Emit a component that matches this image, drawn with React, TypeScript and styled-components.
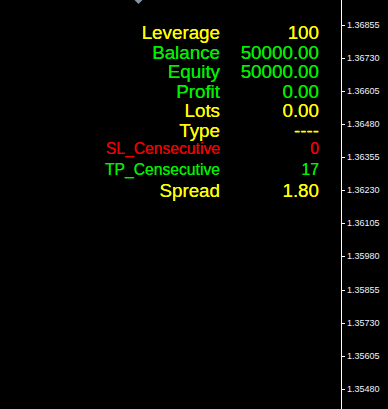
import React from "react";
import styled, { createGlobalStyle } from "styled-components";

const Global = createGlobalStyle`
  html, body { margin: 0; padding: 0; background: #000; }
  body { width: 388px; height: 409px; overflow: hidden; font-family: "Liberation Sans", Arial, sans-serif; }
`;

const Screen = styled.div`
  display: flex;
  width: 388px;
  height: 409px;
  background: #000;
`;

const Chart = styled.div`
  position: relative;
  width: 341px;
  height: 100%;
`;

const Marker = styled.svg`
  position: absolute;
  left: 134px;
  top: 0;
`;

const Panel = styled.div`
  display: grid;
  grid-template-columns: 220px 99px;
  padding-top: 23px;
`;

const Cell = styled.div<{ $size: number; $h: number; $color: string }>`
  height: ${(p) => p.$h}px;
  line-height: ${(p) => p.$h}px;
  font-size: ${(p) => p.$size}px;
  color: ${(p) => p.$color};
  text-align: right;
  white-space: nowrap;
  text-shadow: 0 0 0.25px ${(p) => p.$color};
`;

const Axis = styled.div`
  width: 46px;
  height: 100%;
  border-left: 1px solid #fff;
  padding-top: 8.75px;
  box-sizing: border-box;
  display: flex;
  flex-direction: column;
`;

const AxisRow = styled.div`
  height: 33.1px;
  flex: none;
  display: flex;
  align-items: center;
  gap: 2px;
`;

const Tick = styled.span`
  width: 3px;
  height: 1px;
  background: #fff;
`;

const AxisLabel = styled.span`
  font-size: 9px;
  color: #eef4ff;
  line-height: 1;
`;

const YELLOW = "#ffff00";
const GREEN = "#00ee00";
const RED = "#ee0000";

const rows = [
  { label: "Leverage", value: "100", color: YELLOW, size: 18.8, h: 19.5 },
  { label: "Balance", value: "50000.00", color: GREEN, size: 18.8, h: 19.5 },
  { label: "Equity", value: "50000.00", color: GREEN, size: 18.8, h: 19.5 },
  { label: "Profit", value: "0.00", color: GREEN, size: 18.8, h: 19.5 },
  { label: "Lots", value: "0.00", color: YELLOW, size: 18.8, h: 19.5 },
  { label: "Type", value: "----", color: YELLOW, size: 18.8, h: 20.5 },
  { label: "SL_Censecutive", value: "0", color: RED, size: 15.7, h: 16.9 },
  { label: "TP_Censecutive", value: "17", color: GREEN, size: 15.7, h: 23.1 },
  { label: "Spread", value: "1.80", color: YELLOW, size: 18.8, h: 20.8 },
];

const prices = [
  "1.36855", "1.36730", "1.36605", "1.36480", "1.36355", "1.36230",
  "1.36105", "1.35980", "1.35855", "1.35730", "1.35605", "1.35480",
];

export default function App() {
  return (
    <>
      <Global />
      <Screen>
        <Chart>
          <Marker width="10" height="5" viewBox="0 0 10 5">
            <polygon points="0.5,0 8.5,0 4.5,4" fill="#8593a8" />
          </Marker>
          <Panel>
            {rows.map((r) => (
              <React.Fragment key={r.label}>
                <Cell $size={r.size} $h={r.h} $color={r.color}>{r.label}</Cell>
                <Cell $size={r.size} $h={r.h} $color={r.color}>{r.value}</Cell>
              </React.Fragment>
            ))}
          </Panel>
        </Chart>
        <Axis>
          {prices.map((p) => (
            <AxisRow key={p}>
              <Tick />
              <AxisLabel>{p}</AxisLabel>
            </AxisRow>
          ))}
        </Axis>
      </Screen>
    </>
  );
}
